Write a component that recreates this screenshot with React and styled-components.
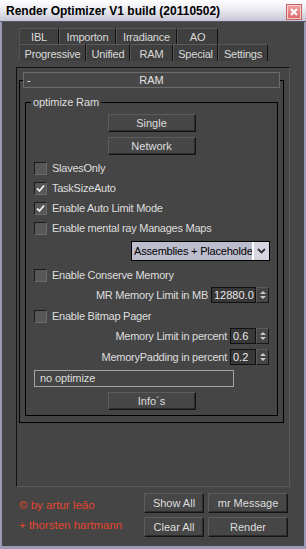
import React from "react";
import styled, { createGlobalStyle } from "styled-components";

const Global = createGlobalStyle`
  html, body { margin: 0; padding: 0; background: #454545; }
  * { box-sizing: border-box; }
  body {
    font-family: "Liberation Sans", Arial, sans-serif;
    font-size: 11px;
    color: #dedede;
  }
`;

const Window = styled.div`
  width: 306px;
  height: 549px;
  display: flex;
  flex-direction: column;
  background: #454545;
`;

const TitleBar = styled.div`
  height: 22px;
  flex: none;
  display: flex;
  align-items: center;
  justify-content: space-between;
  padding: 0 5px 0 6px;
  background: linear-gradient(#ffffff 0%, #eeeef4 40%, #c6c6d4 100%);
  border-bottom: 1px solid #55556a;
`;

const Title = styled.div`
  font-weight: bold;
  font-size: 12px;
  color: #000;
  margin-top: 1px;
`;

const CloseBtn = styled.div`
  width: 14px;
  height: 14px;
  margin-top: 3px;
  border: 1px solid #f4d0d0;
  outline: 1px solid #c86060;
  background: linear-gradient(#f4a0a0, #dc6a6a);
  display: flex;
  align-items: center;
  justify-content: center;
`;

const Body = styled.div`
  flex: 1;
  display: flex;
  flex-direction: column;
  border-left: 2px solid #9a9ab4;
  border-right: 2px solid #9a9ab4;
  border-bottom: 3px solid #9a9ab4;
`;

const TabRows = styled.div`
  margin: 6px 0 0 17px;
  display: flex;
  flex-direction: column;
`;

const TabRow = styled.div`
  display: flex;
  height: ${(p) => p.$h}px;
`;

const Tab = styled.div`
  width: ${(p) => p.$w}px;
  height: 100%;
  display: flex;
  align-items: center;
  justify-content: center;
  background: #3f3f3f;
  border-top: 1px solid #595959;
  border-left: 1px solid #555;
  border-right: 1px solid #121212;
  border-radius: 2px 2px 0 0;
  color: #dadada;
  letter-spacing: -0.2px;
  padding-top: 1px;
`;

const Panel = styled.div`
  margin: 6px 0 0 14px;
  width: 274px;
  height: 420px;
  border: 1px solid;
  border-color: #111 #5a5a5a #5a5a5a #111;
  padding: 4px 0 0 2px;
  display: flex;
  flex-direction: column;
`;

const RollHeader = styled.div`
  position: relative;
  z-index: 1;
  margin-left: 4px;
  width: 257px;
  height: 16px;
  border: 1px solid #6c6c6c;
  background: #474747;
  display: flex;
  align-items: center;
  padding: 0 3px;
  color: #e2e2e2;
`;

const HeaderSign = styled.span`
  width: 12px;
`;

const HeaderTitle = styled.span`
  flex: 1;
  text-align: center;
  margin-right: 12px;
`;

const RollFrame = styled.div`
  margin-top: -8px;
  width: 265px;
  height: 343px;
  border: 1px solid #000;
  padding: 21px 0 0 5px;
`;

const GroupBox = styled.div`
  width: 253px;
  height: 314px;
  border: 1px solid #000;
  display: flex;
  flex-direction: column;
  padding: 0 8px 0 8px;
`;

const Legend = styled.div`
  align-self: flex-start;
  margin: -7px 0 0 -3px;
  height: 13px;
  line-height: 13px;
  padding: 0 2px;
  background: #454545;
  letter-spacing: -0.1px;
`;

const Button = styled.div`
  flex: none;
  width: ${(p) => p.$w}px;
  height: ${(p) => p.$h}px;
  margin-top: ${(p) => p.$mt || 0}px;
  align-self: ${(p) => p.$align || "auto"};
  display: flex;
  align-items: center;
  justify-content: center;
  background: #474747;
  border: 1px solid;
  border-color: #5c5c5c #141414 #141414 #5c5c5c;
  box-shadow: inset -1px -1px 0 #2c2c2c;
  color: #dedede;
`;

const CheckRow = styled.div`
  height: 20px;
  margin-top: ${(p) => p.$mt || 0}px;
  display: flex;
  align-items: center;
  gap: 5px;
  letter-spacing: -0.25px;
`;

const Box = styled.div`
  width: 13px;
  height: 13px;
  border: 1px solid;
  border-color: #1c1c1c #6a6a6a #6a6a6a #1c1c1c;
  background: #575757;
  display: flex;
  align-items: center;
  justify-content: center;
`;

const RightRow = styled.div`
  height: ${(p) => p.$h}px;
  margin-top: ${(p) => p.$mt || 0}px;
  display: flex;
  justify-content: flex-end;
  align-items: center;
  gap: 3px;
  letter-spacing: -0.25px;
`;

const Dropdown = styled.div`
  width: 139px;
  height: 20px;
  border: 1px solid #000;
  background: #bcbdcd;
  display: flex;
  margin-right: -1px;
`;

const DropText = styled.div`
  flex: 1;
  overflow: hidden;
  white-space: nowrap;
  color: #000;
  font-size: 11px;
  line-height: 18px;
  padding-left: 2px;
  letter-spacing: -0.2px;
`;

const DropArrow = styled.div`
  width: 17px;
  border-left: 2px solid #fff;
  background: #d6d6e0;
  display: flex;
  align-items: center;
  justify-content: center;
`;

const Spinner = styled.div`
  display: flex;
  height: 16px;
`;

const SpinField = styled.div`
  width: ${(p) => p.$w}px;
  height: 100%;
  border: 1px solid #111;
  background: #383838;
  color: #eaeaea;
  font-size: 11px;
  line-height: 14px;
  padding-left: 2px;
  letter-spacing: 0;
  white-space: nowrap;
`;

const SpinArrows = styled.div`
  width: 13px;
  height: 100%;
  display: flex;
  flex-direction: column;
  align-items: center;
  justify-content: center;
  gap: 2px;
  background: #464646;
  border: 1px solid;
  border-color: #5a5a5a #1a1a1a #1a1a1a #5a5a5a;
`;

const Tri = styled.div`
  width: 0;
  height: 0;
  border-left: 3px solid transparent;
  border-right: 3px solid transparent;
  ${(p) =>
    p.$up
      ? "border-bottom: 3px solid #c8c8c8;"
      : "border-top: 3px solid #c8c8c8;"}
`;

const TextBox = styled.div`
  width: 200px;
  height: 17px;
  margin-top: 5px;
  border: 1px solid #a4a4a4;
  padding-left: 5px;
  line-height: 15px;
  letter-spacing: -0.1px;
`;

const Footer = styled.div`
  margin-top: 6px;
  padding: 0 16px 0 17px;
  display: flex;
  justify-content: space-between;
`;

const Credits = styled.div`
  display: flex;
  flex-direction: column;
  padding-top: 2px;
  color: #e4452c;
  line-height: 20px;
  font-size: 11.5px;
`;

const ButtonGrid = styled.div`
  display: grid;
  grid-template-columns: 60px 80px;
  grid-auto-rows: 20px;
  gap: 4px;
`;

const Check = () => (
  <svg width="9" height="9" viewBox="0 0 9 9">
    <polyline points="1,4.5 3.5,7 8,1.5" fill="none" stroke="#f0f0f0" strokeWidth="1.8" />
  </svg>
);

const CheckItem = ({ checked, label, mt }) => (
  <CheckRow $mt={mt}>
    <Box>{checked && <Check />}</Box>
    <span>{label}</span>
  </CheckRow>
);

const SpinItem = ({ label, value, w, mt }) => (
  <RightRow $h={16} $mt={mt}>
    <span>{label}</span>
    <Spinner>
      <SpinField $w={w}>{value}</SpinField>
      <SpinArrows>
        <Tri $up />
        <Tri />
      </SpinArrows>
    </Spinner>
  </RightRow>
);

const row1 = [
  ["IBL", 40],
  ["Importon", 57],
  ["Irradiance", 61],
  ["AO", 41],
];
const row2 = [
  ["Progressive", 67],
  ["Unified", 44],
  ["RAM", 43],
  ["Special", 45],
  ["Settings", 50],
];

export default function App() {
  return (
    <>
      <Global />
      <Window>
        <TitleBar>
          <Title>Render Optimizer V1 build (20110502)</Title>
          <CloseBtn>
            <svg width="8" height="8" viewBox="0 0 8 8">
              <path d="M1 1L7 7M7 1L1 7" stroke="#fff" strokeWidth="2" />
            </svg>
          </CloseBtn>
        </TitleBar>
        <Body>
          <TabRows>
            <TabRow $h={16}>
              {row1.map(([t, w]) => (
                <Tab key={t} $w={w}>{t}</Tab>
              ))}
            </TabRow>
            <TabRow $h={17}>
              {row2.map(([t, w]) => (
                <Tab key={t} $w={w}>{t}</Tab>
              ))}
            </TabRow>
          </TabRows>
          <Panel>
            <RollHeader>
              <HeaderSign>-</HeaderSign>
              <HeaderTitle>RAM</HeaderTitle>
            </RollHeader>
            <RollFrame>
              <GroupBox>
                <Legend>optimize Ram</Legend>
                <Button $w={88} $h={18} $mt={5} $align="center">Single</Button>
                <Button $w={88} $h={18} $mt={5} $align="center">Network</Button>
                <CheckItem label="SlavesOnly" mt={3} />
                <CheckItem label="TaskSizeAuto" checked />
                <CheckItem label="Enable Auto Limit Mode" checked />
                <CheckItem label="Enable mental ray Manages Maps" />
                <RightRow $h={20} $mt={3}>
                  <Dropdown>
                    <DropText>Assemblies + Placeholders</DropText>
                    <DropArrow>
                      <svg width="9" height="6" viewBox="0 0 9 6">
                        <path d="M1 1L4.5 4.5L8 1" fill="none" stroke="#333" strokeWidth="1.8" />
                      </svg>
                    </DropArrow>
                  </Dropdown>
                </RightRow>
                <CheckItem label="Enable Conserve Memory" mt={4} />
                <SpinItem label="MR Memory Limit in MB" value="12880.0" w={45} mt={2} />
                <CheckItem label="Enable Bitmap Pager" mt={3} />
                <SpinItem label="Memory Limit in percent" value="0.6" w={26} mt={2} />
                <SpinItem label="MemoryPadding in percent" value="0.2" w={26} mt={5} />
                <TextBox>no optimize</TextBox>
                <Button $w={88} $h={18} $mt={5} $align="center">Info´s</Button>
              </GroupBox>
            </RollFrame>
          </Panel>
          <Footer>
            <Credits>
              <span>© by artur leão</span>
              <span>+ thorsten hartmann</span>
            </Credits>
            <ButtonGrid>
              <Button $w={60} $h={20}>Show All</Button>
              <Button $w={80} $h={20}>mr Message</Button>
              <Button $w={60} $h={20}>Clear All</Button>
              <Button $w={80} $h={20}>Render</Button>
            </ButtonGrid>
          </Footer>
        </Body>
      </Window>
    </>
  );
}
